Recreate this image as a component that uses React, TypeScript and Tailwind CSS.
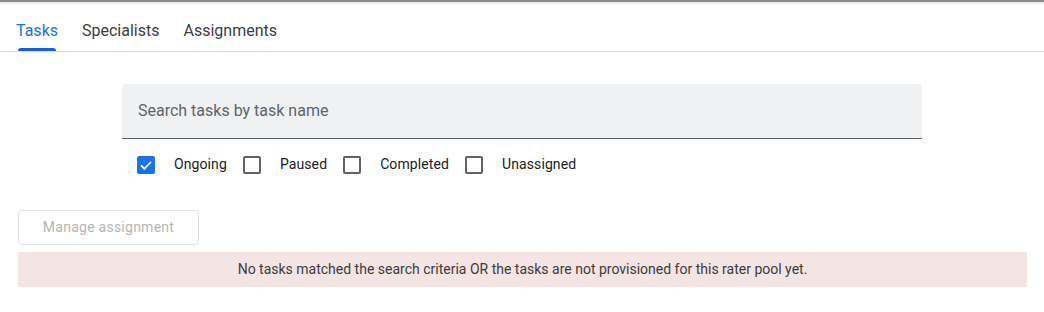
import React, { useState } from 'react';

const tabs = ['Tasks', 'Specialists', 'Assignments'];

const filters = [
  { label: 'Ongoing', checked: true },
  { label: 'Paused', checked: false },
  { label: 'Completed', checked: false },
  { label: 'Unassigned', checked: false },
];

const Box = ({ checked }: { checked: boolean }) =>
  checked ? (
    <span className="flex h-[18px] w-[18px] items-center justify-center rounded-[2px] bg-[#1a73e8]">
      <svg viewBox="0 0 24 24" className="h-[16px] w-[16px]" fill="none" stroke="white" strokeWidth="2.6">
        <path d="M4.5 12.5l5 5 10-10" />
      </svg>
    </span>
  ) : (
    <span className="h-[18px] w-[18px] rounded-[2px] border-2 border-[#5f6368]" />
  );

const App = () => {
  const [active] = useState('Tasks');
  return (
    <div className="min-h-screen bg-white font-['Roboto','Liberation_Sans',sans-serif]">
      <div className="h-[5px] border-t-2 border-[#8a8a8a] bg-gradient-to-b from-[#e6e6e6] to-white" />
      <div className="flex gap-6 border-b border-[#dadce0] px-4 pt-[12px]">
        {tabs.map((t) => (
          <div key={t} className="relative pb-[6px] text-[16px] leading-[28px]">
            <span className={t === active ? 'text-[#1a73e8]' : 'text-[#3c4043]'}>{t}</span>
            {t === active && (
              <span className="absolute bottom-0 left-[2px] right-[2px] h-[3px] rounded-t-[3px] bg-[#1a5fd6]" />
            )}
          </div>
        ))}
      </div>

      <div className="mx-auto mt-[32px] w-[800px]">
        <div className="flex h-[55px] items-center rounded-t-[4px] border-b border-[#5f6368] bg-[#f0f1f3] px-4 text-[16px] text-[#5f6368]">
          Search tasks by task name
        </div>
        <div className="mt-[15px] flex items-center pl-[15px] text-[14px] tracking-[0.1px] text-[#202124]">
          {filters.map((f) => (
            <label key={f.label} className="mr-[16px] flex items-center gap-[19px]">
              <Box checked={f.checked} />
              <span>{f.label}</span>
            </label>
          ))}
        </div>
      </div>

      <div className="ml-[18px] mr-[17px] mt-[35px]">
        <button className="h-[35px] w-[181px] rounded-[4px] border border-[#e0e0e0] text-[14px] tracking-[0.25px] text-[#b4b4b4]">
          Manage assignment
        </button>
        <div className="mt-[7px] flex h-[35px] items-center justify-center bg-[#f4e4e4] text-[14px] text-[#3c3c3c]">
          No tasks matched the search criteria OR the tasks are not provisioned for this rater pool yet.
        </div>
      </div>
    </div>
  );
};

export default App;
